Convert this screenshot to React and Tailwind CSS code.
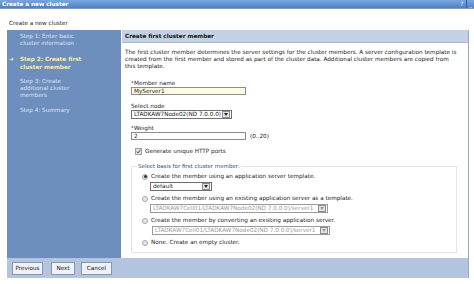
import React from 'react';

const font = { fontFamily: '"DejaVu Sans", Verdana, sans-serif' };

function DropButton({ disabled }) {
    return (
        <span className="ml-[1px] flex h-[7px] w-[8px] items-center justify-center border border-[#8c8c8c] bg-[#e4e4e4]">
            <svg width="4" height="3" viewBox="0 0 4 3">
                <path d="M0 0 L4 0 L2 3 Z" fill={disabled ? '#9a9a9a' : '#222'} />
            </svg>
        </span>
    );
}

function Select({ value, width, disabled }) {
    return (
        <div
            className={`flex h-[9px] items-center justify-between border ${disabled ? 'border-[#9a9a9a] text-[#9a9a9a]' : 'border-[#6f6f6f] text-[#222]'} bg-white pl-[2px] pr-[1px] ${width}`}
        >
            <span className="whitespace-nowrap">{value}</span>
            <DropButton disabled={disabled} />
        </div>
    );
}

function Radio({ checked }) {
    return (
        <span className="flex h-[6px] w-[6px] shrink-0 items-center justify-center rounded-full border border-[#a8a8a8] bg-[#e6e6e6]">
            {checked && <span className="h-[3px] w-[3px] rounded-full bg-[#333]" />}
        </span>
    );
}

function Option({ checked, label, children }) {
    return (
        <div className="flex flex-col">
            <div className="flex items-center gap-[3px]">
                <Radio checked={checked} />
                <span className="whitespace-nowrap">{label}</span>
            </div>
            {children && <div className="mt-[2px] pl-[8px]">{children}</div>}
        </div>
    );
}

function App() {
    return (
        <div className="relative h-[284px] w-[474px] overflow-hidden bg-white text-[5.7px] leading-[7px] text-[#222]" style={font}>
            {/* window title bar */}
            <div className="flex h-[9px] items-center justify-between border-b border-[#7f98b8] bg-gradient-to-b from-[#7aa6de] to-[#4b82c6] pl-[2px]">
                <span className="font-bold text-white">Create a new cluster</span>
                <div className="flex h-full items-center">
                    <span className="px-[3px] text-[#dfe9f7]">?</span>
                    <span className="h-full w-[1px] bg-[#2f5f9c]" />
                    <span className="px-[2px] text-[#dfe9f7]">_</span>
                </div>
            </div>

            <div className="h-[21px] pl-[9px] pt-[11px] text-[#222]">Create a new cluster</div>

            <div className="ml-[7px] flex h-[228px] w-[462px]">
                {/* steps */}
                <div className="w-[114px] bg-[#6e8ebd] pt-[3px] text-[#dce6f3]">
                    <div className="pl-[13px]">
                        <div>Step 1: Enter basic</div>
                        <div>cluster information</div>
                    </div>
                    <div className="mt-[8px] flex font-bold leading-[8px] text-[#f4ecb0]">
                        <span className="w-[13px] pl-[2px] text-white">➔</span>
                        <div>
                            <div>Step 2: Create first</div>
                            <div>cluster member</div>
                        </div>
                    </div>
                    <div className="mt-[7px] pl-[13px]">
                        <div>Step 3: Create</div>
                        <div>additional cluster</div>
                        <div>members</div>
                    </div>
                    <div className="mt-[8px] pl-[13px]">Step 4: Summary</div>
                </div>

                {/* content */}
                <div className="flex-1 border-r border-[#9aa9bd] pl-[1px]">
                    <div className="flex h-[13px] items-center border-b border-[#aab8cc] bg-[#c4d1e5] pl-[3px] font-bold text-[#111]">
                        Create first cluster member
                    </div>
                    <div className="mt-[6px] pl-[3px] whitespace-nowrap">
                        <div>The first cluster member determines the server settings for the cluster members. A server configuration template is</div>
                        <div>created from the first member and stored as part of the cluster data. Additional cluster members are copied from</div>
                        <div>this template.</div>
                    </div>

                    <div className="mt-[10px] pl-[9px]">
                        <div className="flex items-center">
                            <span className="w-[3px] text-[#444]">*</span>
                            <span>Member name</span>
                        </div>
                        <div className="flex h-[8px] w-[115px] items-center border border-[#8c8c8c] bg-[#fffbe3] pl-[2px]">MyServer1</div>

                        <div className="mt-[8px]">Select node</div>
                        <Select value="LTADKAW7Node02(ND 7.0.0.0)" width="w-[101px]" />

                        <div className="mt-[6px] flex items-center">
                            <span className="w-[3px] text-[#444]">*</span>
                            <span>Weight</span>
                        </div>
                        <div className="flex items-center">
                            <div className="flex h-[8px] w-[115px] items-center border border-[#8c8c8c] bg-white pl-[2px]">2</div>
                            <span className="ml-[4px]">(0..20)</span>
                        </div>

                        <div className="mt-[8px] flex items-center gap-[3px] pl-[4px]">
                            <span className="flex h-[7px] w-[7px] items-center justify-center border border-[#a0a0a0] bg-[#e2e2e2]">
                                <svg width="5" height="5" viewBox="0 0 5 5">
                                    <path d="M0.6 2.6 L2 4 L4.5 0.6" stroke="#555" strokeWidth="1" fill="none" />
                                </svg>
                            </span>
                            <span>Generate unique HTTP ports</span>
                        </div>

                        <fieldset className="mt-[8px] mr-[11px] flex flex-col gap-[4px] border border-[#e4e4e4] pb-[6px] pl-[10px] pt-[3px]">
                            <legend className="ml-[-5px] px-[1px] text-[5.5px] text-[#2b4f7e]">Select basis for first cluster member:</legend>
                            <Option checked label="Create the member using an application server template.">
                                <Select value="default" width="w-[62px]" />
                            </Option>
                            <Option label="Create the member using an existing application server as a template.">
                                <Select value="LTADKAW7Cell01/LTADKAW7Node02(ND 7.0.0.0)/server1" width="w-[178px]" disabled />
                            </Option>
                            <Option label="Create the member by converting an existing application server.">
                                <div className="pl-[2px]">
                                    <Select value="LTADKAW7Cell01/LTADKAW7Node02(ND 7.0.0.0)/server1" width="w-[178px]" disabled />
                                </div>
                            </Option>
                            <Option label="None. Create an empty cluster." />
                        </fieldset>
                    </div>
                </div>
            </div>

            {/* buttons */}
            <div className="ml-[7px] flex h-[20px] w-[462px] items-center gap-[8px] border-r border-[#9aa9bd] bg-[#b2c4df] pl-[5px]">
                <button className="h-[13px] w-[31px] border border-[#8a96a8] bg-[#eef1f7] text-[#111]">Previous</button>
                <button className="h-[13px] w-[24px] border border-[#8a96a8] bg-[#eef1f7] text-[#111]">Next</button>
                <button className="ml-[-2px] h-[13px] w-[31px] border border-[#8a96a8] bg-[#eef1f7] text-[#111]">Cancel</button>
            </div>
        </div>
    );
}

export default App;
